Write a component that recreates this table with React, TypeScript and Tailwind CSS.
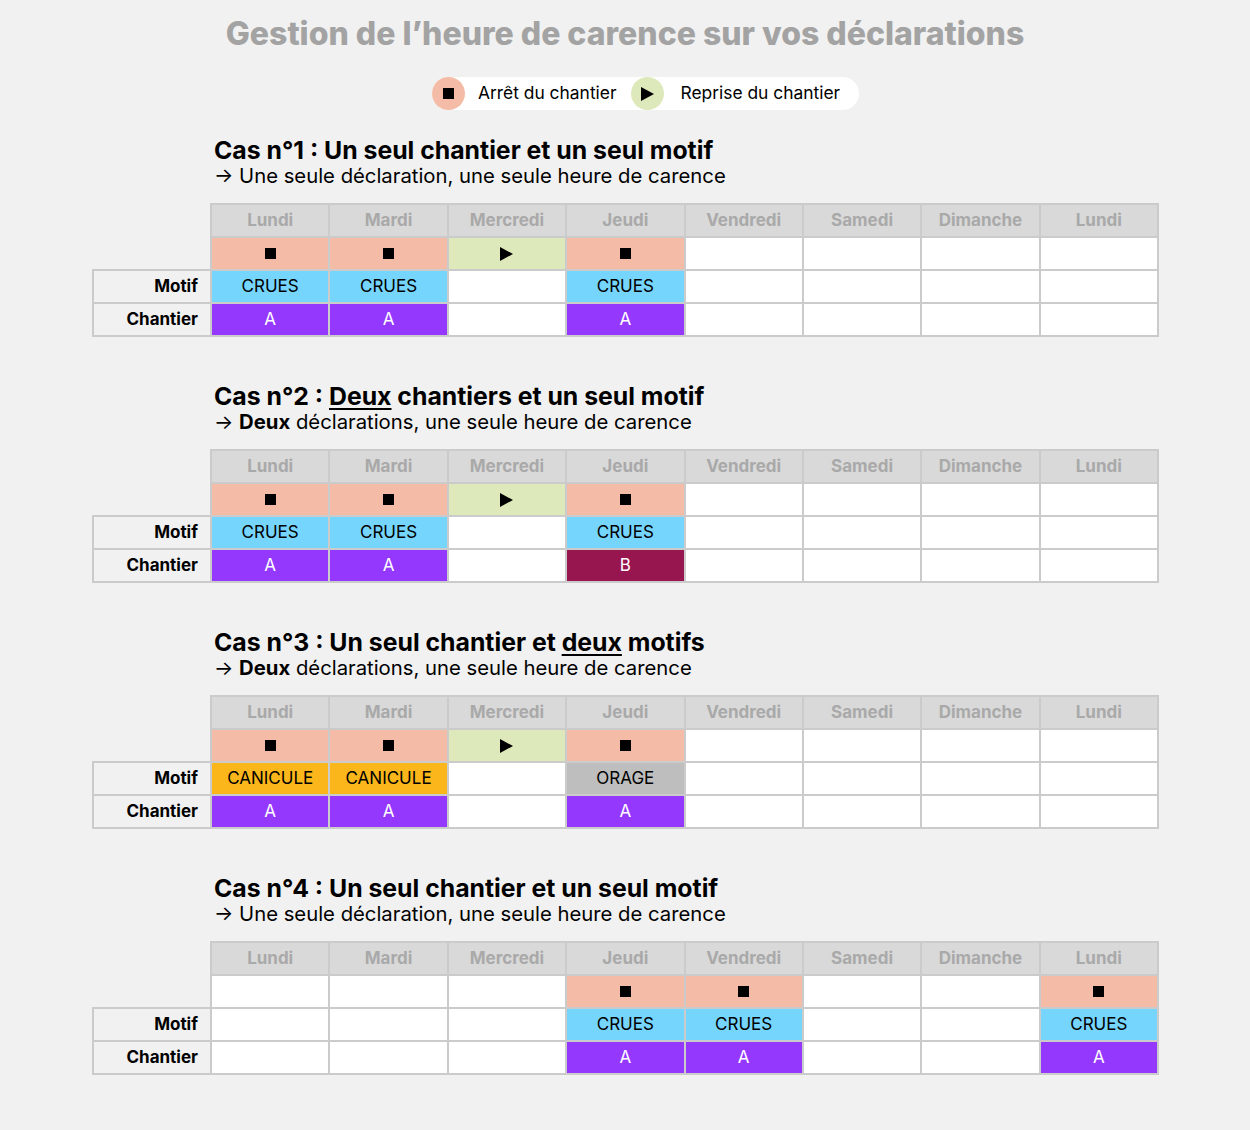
import React from 'react';

type Status = 'stop' | 'play' | null;
type Tag = { label: string; bg: string; text: string } | null;
type Day = { status: Status; motif: Tag; chantier: Tag };

const days = ['Lundi', 'Mardi', 'Mercredi', 'Jeudi', 'Vendredi', 'Samedi', 'Dimanche', 'Lundi'];

const CRUES: Tag = { label: 'CRUES', bg: 'bg-[#76d5fd]', text: 'text-black' };
const CANICULE: Tag = { label: 'CANICULE', bg: 'bg-[#fbb61b]', text: 'text-black' };
const ORAGE: Tag = { label: 'ORAGE', bg: 'bg-[#bebebe]', text: 'text-black' };
const A: Tag = { label: 'A', bg: 'bg-[#9538fe]', text: 'text-white' };
const B: Tag = { label: 'B', bg: 'bg-[#98164f]', text: 'text-white' };

const empty: Day = { status: null, motif: null, chantier: null };

const cases: { title: React.ReactNode; subtitle: React.ReactNode; cells: Day[] }[] = [
  {
    title: <>Cas n°1 : Un seul chantier et un seul motif</>,
    subtitle: <>Une seule déclaration, une seule heure de carence</>,
    cells: [
      { status: 'stop', motif: CRUES, chantier: A },
      { status: 'stop', motif: CRUES, chantier: A },
      { status: 'play', motif: null, chantier: null },
      { status: 'stop', motif: CRUES, chantier: A },
      empty, empty, empty, empty,
    ],
  },
  {
    title: <>Cas n°2 : <span className="underline underline-offset-[3px] decoration-2">Deux</span> chantiers et un seul motif</>,
    subtitle: <><span className="font-bold">Deux</span> déclarations, une seule heure de carence</>,
    cells: [
      { status: 'stop', motif: CRUES, chantier: A },
      { status: 'stop', motif: CRUES, chantier: A },
      { status: 'play', motif: null, chantier: null },
      { status: 'stop', motif: CRUES, chantier: B },
      empty, empty, empty, empty,
    ],
  },
  {
    title: <>Cas n°3 : Un seul chantier et <span className="underline underline-offset-[3px] decoration-2">deux</span> motifs</>,
    subtitle: <><span className="font-bold">Deux</span> déclarations, une seule heure de carence</>,
    cells: [
      { status: 'stop', motif: CANICULE, chantier: A },
      { status: 'stop', motif: CANICULE, chantier: A },
      { status: 'play', motif: null, chantier: null },
      { status: 'stop', motif: ORAGE, chantier: A },
      empty, empty, empty, empty,
    ],
  },
  {
    title: <>Cas n°4 : Un seul chantier et un seul motif</>,
    subtitle: <>Une seule déclaration, une seule heure de carence</>,
    cells: [
      empty, empty, empty,
      { status: 'stop', motif: CRUES, chantier: A },
      { status: 'stop', motif: CRUES, chantier: A },
      empty, empty,
      { status: 'stop', motif: CRUES, chantier: A },
    ],
  },
];

const StopIcon = () => <div className="w-[11px] h-[11px] bg-black" />;

const PlayIcon = () => (
  <svg width="13" height="14" viewBox="0 0 13 14">
    <path d="M0 0 L13 7 L0 14 Z" fill="black" />
  </svg>
);

const cellBase = 'border-2 border-[#cbcbcb] h-[33px] p-0 text-center align-middle';

const CaseTable: React.FC<{ cells: Day[] }> = ({ cells }) => (
  <table className="table-fixed border-collapse w-[1067px] text-[17px]">
    <colgroup>
      <col className="w-[118px]" />
      {days.map((_, i) => <col key={i} />)}
    </colgroup>
    <tbody>
      <tr>
        <td className="p-0" />
        {days.map((d, i) => (
          <td key={i} className={`${cellBase} bg-[#d9d9d9] text-[#a9a9a9] font-bold`}>{d}</td>
        ))}
      </tr>
      <tr>
        <td className="p-0" />
        {cells.map((c, i) => (
          <td
            key={i}
            className={`${cellBase} ${c.status === 'stop' ? 'bg-[#f4bca6]' : c.status === 'play' ? 'bg-[#dde9bb]' : 'bg-white'}`}
          >
            <div className="flex items-center justify-center">
              {c.status === 'stop' && <StopIcon />}
              {c.status === 'play' && <PlayIcon />}
            </div>
          </td>
        ))}
      </tr>
      <tr>
        <td className={`${cellBase} bg-[#f1f1f1] text-right pr-[12px] font-bold text-black`}>Motif</td>
        {cells.map((c, i) => (
          <td key={i} className={`${cellBase} ${c.motif ? `${c.motif.bg} ${c.motif.text}` : 'bg-white'}`}>
            {c.motif?.label}
          </td>
        ))}
      </tr>
      <tr>
        <td className={`${cellBase} bg-[#f1f1f1] text-right pr-[12px] font-bold text-black`}>Chantier</td>
        {cells.map((c, i) => (
          <td key={i} className={`${cellBase} ${c.chantier ? `${c.chantier.bg} ${c.chantier.text}` : 'bg-white'}`}>
            {c.chantier?.label}
          </td>
        ))}
      </tr>
    </tbody>
  </table>
);

export default function App() {
  return (
    <div
      className="min-h-[1130px] w-full bg-[#f1f1f1] text-black pt-[14px]"
      style={{ fontFamily: 'Inter, "Noto Sans", sans-serif' }}
    >
      <h1 className="text-center text-[32px] leading-[40px] font-extrabold text-[#a3a3a3]">
        Gestion de l’heure de carence sur vos déclarations
      </h1>

      {/* Legend */}
      <div className="flex mt-[23px] pl-[432px]">
        <div className="flex items-center bg-white rounded-full h-[33px] pr-[19px]">
          <div className="w-[33px] h-[33px] rounded-full bg-[#f4bca6] flex items-center justify-center">
            <StopIcon />
          </div>
          <span className="ml-[13px] mr-[15px] text-[17.4px]">Arrêt du chantier</span>
          <div className="w-[33px] h-[33px] rounded-full bg-[#dde9bb] flex items-center justify-center">
            <PlayIcon />
          </div>
          <span className="ml-[16px] text-[17.4px]">Reprise du chantier</span>
        </div>
      </div>

      <div className="mt-[26px] ml-[92px] flex flex-col gap-[45px]">
        {cases.map((c, i) => (
          <section key={i}>
            <div className="ml-[122px]">
              <h2 className="text-[24.8px] leading-[28px] font-bold">{c.title}</h2>
              <p className="text-[20.3px] leading-[24px]">→ {c.subtitle}</p>
            </div>
            <div className="mt-[15px]">
              <CaseTable cells={c.cells} />
            </div>
          </section>
        ))}
      </div>
    </div>
  );
}
